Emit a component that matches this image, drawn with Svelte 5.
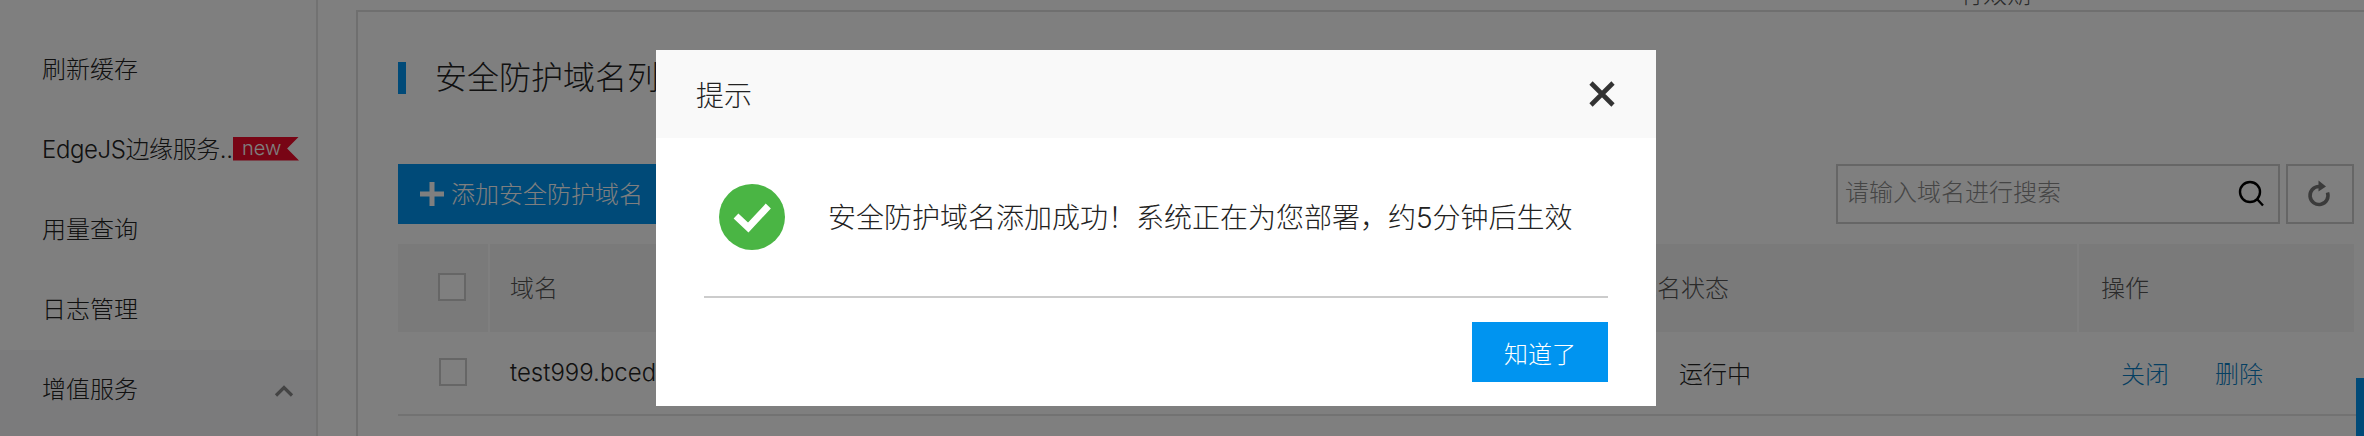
<script lang="ts">
  // CDN console domain list, with the "domain added" dialog open over it.
  const menu = ['刷新缓存', 'EdgeJS边缘服务...', '用量查询', '日志管理'];
</script>

<div class="page">
  <aside class="sidebar">
    {#each menu as item, i}
      <div class="item">
        <span class="label" class:cut={i === 1}>{item}</span>
        {#if i === 1}<span class="new">new</span>{/if}
      </div>
    {/each}
    <div class="item section">
      <span class="label">增值服务</span>
      <svg class="chevron" width="20" height="12" viewBox="0 0 20 12">
        <path d="M2 10.5 L10 2.5 L18 10.5" fill="none" stroke="#888" stroke-width="3.2" />
      </svg>
    </div>
  </aside>

  <main class="main">
    <div class="prev-row"><span>有效期</span></div>
    <section class="card">
      <h2 class="title">安全防护域名列表</h2>

      <div class="toolbar">
        <button type="button" class="add">
          <svg width="24" height="24" viewBox="0 0 24 24">
            <path d="M12 0 V24 M0 12 H24" stroke="#fff" stroke-width="5" />
          </svg>
          <span>添加安全防护域名</span>
        </button>
        <div class="tools">
          <label class="search">
            <input type="text" placeholder="请输入域名进行搜索" />
            <svg width="28" height="28" viewBox="0 0 28 28">
              <circle cx="12" cy="12" r="10" fill="none" stroke="#000" stroke-width="2.4" />
              <path d="M19 19 L25 25.500" stroke="#000" stroke-width="2.4" />
            </svg>
          </label>
          <button type="button" class="refresh" aria-label="刷新">
            <svg width="28" height="28" viewBox="0 0 28 28">
              <path d="M21.500 12.500 A9 9 0 1 1 13 6.500" fill="none" stroke="#777" stroke-width="3.6" />
              <path d="M12.500 0.500 L20 6.500 L12.500 11.500 Z" fill="#777" />
            </svg>
          </button>
        </div>
      </div>

      <div class="table">
        <div class="th check"><span class="box"></span></div>
        <div class="th">域名</div>
        <div class="th">域名状态</div>
        <div class="th op">操作</div>

        <div class="td check"><span class="box"></span></div>
        <div class="td domain">test999.bcedocument.com</div>
        <div class="td status">运行中</div>
        <div class="td actions"><a href="#close">关闭</a><a href="#delete">删除</a></div>
      </div>
    </section>
  </main>

  <div class="edge"></div>

  <div class="overlay">
    <div class="modal">
      <header class="modal-head">
        <span>提示</span>
        <svg width="26" height="26" viewBox="0 0 26 26">
          <path d="M2 2 L24 24 M24 2 L2 24" stroke="#333" stroke-width="4.600" />
        </svg>
      </header>
      <div class="modal-body">
        <svg class="ok" width="66" height="66" viewBox="0 0 66 66">
          <circle cx="33" cy="33" r="33" fill="#4ab544" />
          <path d="M17 32 L29.300 43.500 L49.300 22" fill="none" stroke="#fff" stroke-width="7" />
        </svg>
        <p>安全防护域名添加成功！系统正在为您部署，约5分钟后生效</p>
      </div>
      <footer class="modal-foot">
        <button type="button" class="confirm">知道了</button>
      </footer>
    </div>
  </div>
</div>

<style>
  :global(body) { margin: 0; background: #fff; }

  .page {
    position: relative; display: flex; width: 2364px; height: 436px; overflow: hidden;
    font-family: Inter, "Noto Sans CJK SC", sans-serif; font-size: 24px; font-weight: 300; color: #222;
  }

  .sidebar {
    flex: none; width: 316px; padding-top: 27px;
    border-right: 2px solid #e4e4e4; background: #fff;
  }
  .item { display: flex; align-items: center; height: 80px; padding-left: 42px; }
  .label { white-space: nowrap; }
  .label.cut { width: 191px; overflow: hidden; letter-spacing: -0.4px; }
  .new {
    width: 66px; height: 24px; line-height: 23px; margin-top: 3px; padding-left: 9px; box-sizing: border-box;
    font-size: 20px; color: #fff; background: #f00a2a;
    clip-path: polygon(0 0, 100% 0, 82% 50%, 100% 100%, 0 100%);
  }
  .section {
    justify-content: space-between; height: 86px; margin-top: 3px; padding: 0 22px 12px 42px;
    background: #f6f6f8; box-sizing: border-box;
  }
  .chevron { margin-top: 8px; }

  .main { flex: 1; min-width: 0; padding-left: 38px; overflow: hidden; }
  .prev-row { height: 10px; overflow: hidden; }
  .prev-row span { display: block; margin: -19px 0 0 1603px; line-height: 28px; color: #555; }
  .card {
    width: 2030px; height: 600px; padding: 50px 0 0 40px; box-sizing: border-box;
    border: 2px solid #dedede;
  }

  .title {
    margin: 0 0 70px; padding-left: 29px; height: 32px; line-height: 31px;
    border-left: 8px solid #0094f0;
    font-size: 32px; font-weight: 300; color: #222;
  }

  .toolbar { display: flex; justify-content: space-between; width: 1956px; height: 60px; margin-bottom: 20px; }
  button { font: inherit; border: none; padding: 0; cursor: pointer; }
  .add {
    display: flex; align-items: center; gap: 7px; width: 265px; padding-left: 22px;
    background: #0094f0; color: #fff; box-sizing: border-box;
  }
  .add span { padding-bottom: 4px; }
  .tools { display: flex; gap: 6px; }
  .search {
    display: flex; align-items: center; width: 444px; padding: 0 12px 0 7px; box-sizing: border-box;
    border: 2px solid #ccc;
  }
  .search input {
    flex: 1; min-width: 0; border: none; outline: none; padding: 0 0 4px; font: inherit; color: #333; background: none;
  }
  .search input::placeholder { color: #8a8a8a; opacity: 1; }
  .refresh {
    display: flex; align-items: center; justify-content: center; width: 68px; background: none; border: 2px solid #ccc;
  }

  .table {
    display: grid; grid-template-columns: 90px 1121px 464px 275px; column-gap: 2px; width: 1956px;
    grid-template-rows: 88px 84px;
  }
  .th { display: flex; align-items: center; padding: 0 0 3px 20px; background: #f5f5f5; color: #555; }
  .th.op { padding-left: 22px; }
  .td { display: flex; align-items: center; padding: 0 0 2px 20px; margin-right: -2px; border-bottom: 2px solid #e4e4e4; color: #222; }
  .check { justify-content: center; padding-left: 18px; }
  .box { width: 24px; height: 24px; border: 2px solid #ccc; background: #fff; }
  .status { padding-left: 66px; }
  .actions { gap: 46px; padding-left: 42px; }
  .actions a { color: #0b7fc4; text-decoration: none; }

  .edge { position: absolute; right: 0; top: 378px; bottom: 0; width: 8px; background: #0094f0; }

  .overlay {
    position: absolute; inset: 0; padding: 50px 0 0 656px; box-sizing: border-box;
    background: rgba(0, 0, 0, 0.5);
  }
  .modal { width: 1000px; height: 356px; background: #fff; }
  .modal-head {
    display: flex; align-items: center; justify-content: space-between; height: 88px;
    padding: 0 41px 0 40px; background: #f9f9f9; font-size: 28px; color: #222;
  }
  .modal-body {
    display: flex; align-items: center; gap: 43px; height: 158px; margin: 0 48px; padding-left: 15px;
    border-bottom: 2px solid #ccc;
  }
  .modal-body p { margin: 0 0 3px; font-size: 28px; color: #222; white-space: nowrap; }
  .ok { flex: none; }
  .modal-foot { display: flex; justify-content: flex-end; padding: 24px 48px 0; }
  .confirm { width: 136px; height: 60px; background: #0094f0; color: #fff; }
</style>
